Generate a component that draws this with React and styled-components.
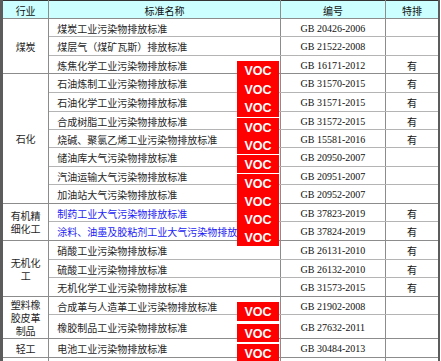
import React from "react";
import styled, { createGlobalStyle } from "styled-components";

const GlobalStyle = createGlobalStyle`
  html, body {
    margin: 0;
    padding: 0;
    background: #fff;
  }
  body {
    font-family: "Noto Sans CJK SC", "Noto Sans", sans-serif;
  }
`;

const groups = [
  {
    name: "煤炭",
    rows: [
      ["煤炭工业污染物排放标准", "GB 20426-2006", "", 18],
      ["煤层气（煤矿瓦斯）排放标准", "GB 21522-2008", "", 19],
      ["炼焦化学工业污染物排放标准", "GB 16171-2012", "有", 18],
    ],
  },
  {
    name: "石化",
    rows: [
      ["石油炼制工业污染物排放标准", "GB 31570-2015", "有", 19],
      ["石油化学工业污染物排放标准", "GB 31571-2015", "有", 19],
      ["合成树脂工业污染物排放标准", "GB 31572-2015", "有", 18],
      ["烧碱、聚氯乙烯工业污染物排放标准", "GB 15581-2016", "有", 18],
      ["储油库大气污染物排放标准", "GB 20950-2007", "", 19],
      ["汽油运输大气污染物排放标准", "GB 20951-2007", "", 18],
      ["加油站大气污染物排放标准", "GB 20952-2007", "", 19],
    ],
  },
  {
    name: "有机精细化工",
    blue: true,
    rows: [
      ["制药工业大气污染物排放标准", "GB 37823-2019", "有", 18],
      ["涂料、油墨及胶粘剂工业大气污染物排放标准", "GB 37824-2019", "有", 19],
    ],
  },
  {
    name: "无机化工",
    rows: [
      ["硝酸工业污染物排放标准", "GB 26131-2010", "有", 19],
      ["硫酸工业污染物排放标准", "GB 26132-2010", "有", 18],
      ["无机化学工业污染物排放标准", "GB 31573-2015", "有", 19],
    ],
  },
  {
    name: "塑料橡胶皮革制品",
    rows: [
      ["合成革与人造革工业污染物排放标准", "GB 21902-2008", "", 18],
      ["橡胶制品工业污染物排放标准", "GB 27632-2011", "", 24],
    ],
  },
  {
    name: "轻工",
    rows: [["电池工业污染物排放标准", "GB 30484-2013", "", 19]],
  },
  {
    name: "",
    rows: [["", "", "", 19]],
  },
];

// red VOC marks pasted over the sheet: top, height, count
const vocBlocks = [
  { top: 61, height: 56, count: 3 },
  { top: 118, height: 36, count: 2 },
  { top: 155, height: 18, count: 1 },
  { top: 174, height: 72, count: 4 },
  { top: 302, height: 19, count: 1 },
  { top: 324, height: 18, count: 1 },
  { top: 344, height: 19, count: 1 },
];

const App = () => {
  return (
    <>
      <GlobalStyle />
      <Sheet>
        <Table>
          <colgroup>
            <col style={{ width: 47 }} />
            <col style={{ width: 230 }} />
            <col style={{ width: 105 }} />
            <col style={{ width: 53 }} />
          </colgroup>
          <thead>
            <Row h={18}>
              <HeadCell>行业</HeadCell>
              <HeadCell>标准名称</HeadCell>
              <HeadCell>编号</HeadCell>
              <HeadCell>特排</HeadCell>
            </Row>
          </thead>
          <tbody>
            {groups.map((g) =>
              g.rows.map((r, i) => (
                <Row key={g.name + i} h={r[3]}>
                  {i === 0 && (
                    <GroupCell rowSpan={g.rows.length}>{g.name}</GroupCell>
                  )}
                  <NameCell blue={g.blue} last={i === g.rows.length - 1}>
                    {r[0]}
                  </NameCell>
                  <CodeCell last={i === g.rows.length - 1}>{r[1]}</CodeCell>
                  <FlagCell last={i === g.rows.length - 1}>{r[2]}</FlagCell>
                </Row>
              ))
            )}
          </tbody>
        </Table>
        {vocBlocks.map((b) => (
          <VocBlock key={b.top} style={{ top: b.top, height: b.height }}>
            {Array.from({ length: b.count }).map((_, i) => (
              <VocMark key={i}>VOC</VocMark>
            ))}
          </VocBlock>
        ))}
      </Sheet>
    </>
  );
};

const Sheet = styled.div`
  position: relative;
  width: 441px;
  height: 361px;
  overflow: hidden;
`;

const Table = styled.table`
  width: 440px;
  border-collapse: collapse;
  table-layout: fixed;
  border-top: 1px solid #333;
  border-left: 3px solid #5c5c5c;
  border-right: 2px solid #5c5c5c;
`;

const Row = styled.tr`
  height: ${(p) => p.h}px;
`;

const Cell = styled.td`
  padding: 0;
  font-size: 10px;
  line-height: 13px;
  color: #262626;
  white-space: nowrap;
  overflow: hidden;
  vertical-align: middle;
  border-right: 1px solid #8c8c8c;
  border-bottom: 1px solid ${(p) => (p.last ? "#8c8c8c" : "#b4b4b4")};
`;

const HeadCell = styled.th`
  padding: 2px 0 0;
  font-size: 10px;
  font-weight: normal;
  line-height: 13px;
  color: #111;
  background: #ccffff;
  text-align: center;
  border-right: 1px solid #8c8c8c;
  border-bottom: 1px solid #8c8c8c;
`;

const GroupCell = styled(Cell)`
  padding: 0 6px;
  text-align: center;
  white-space: normal;
  border-bottom: 1px solid #8c8c8c;
`;

const NameCell = styled(Cell)`
  padding: 1px 0 0 8px;
  color: ${(p) => (p.blue ? "#1c1cf5" : "#262626")};
`;

const CodeCell = styled(Cell)`
  padding-top: 1px;
  text-align: center;
  font-family: "Liberation Serif", "Times New Roman", serif;
  font-size: 10px;
  color: #111;
`;

const FlagCell = styled(Cell)`
  padding-top: 1px;
  text-align: center;
  color: #111;
  border-right: none;
`;

const VocBlock = styled.div`
  position: absolute;
  left: 237px;
  width: 42px;
  display: flex;
  flex-direction: column;
  background: #ff0000;
`;

const VocMark = styled.div`
  flex: 1;
  display: flex;
  align-items: center;
  justify-content: center;
  color: #fff;
  font-family: "Liberation Sans", Arial, sans-serif;
  font-weight: bold;
  font-size: 12.5px;
  padding-top: 1px;
`;

export default App;
